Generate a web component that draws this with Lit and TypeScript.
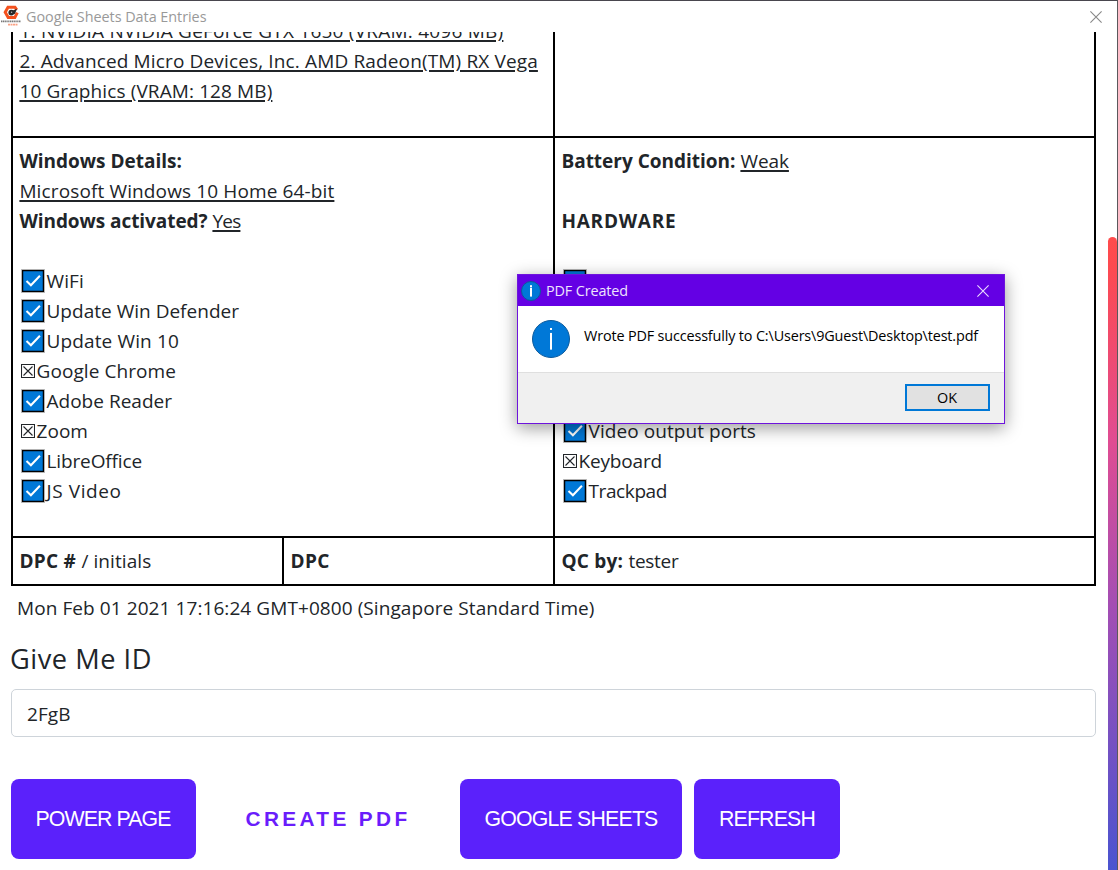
import { LitElement, html, css, svg, nothing } from "lit";
import { customElement, property } from "lit/decorators.js";

/** A run of text whose tracking is adjusted so that it fills a given measure. */
@customElement("fit-text")
class FitText extends LitElement {
  @property({ type: Number }) w = 0;
  static styles = css`
    :host { display: inline-block; white-space: pre; text-decoration: inherit; }
  `;
  render() {
    return html`<slot></slot>`;
  }
  firstUpdated() {
    const n = (this.textContent || "").length;
    const natural = this.getBoundingClientRect().width;
    if (this.w && n) this.style.letterSpacing = `${(this.w - natural) / n}px`;
  }
}

type Item = [boolean, string, number];

const software: Item[] = [
  [true, "WiFi", 37.5],
  [true, "Update Win Defender", 192.5],
  [true, "Update Win 10", 132.5],
  [false, "Google Chrome", 139.5],
  [true, "Adobe Reader", 125.5],
  [false, "Zoom", 51.5],
  [true, "LibreOffice", 95.5],
  [true, "JS Video", 75],
];

const hardware: Item[] = [
  [true, "", 0],
  [true, "", 0],
  [true, "", 0],
  [true, "", 0],
  [true, "", 0],
  [true, "Video output ports", 167.5],
  [false, "Keyboard", 83.5],
  [true, "Trackpad", 78.5],
];

const tick = html`<svg class="tick" width="24" height="24" viewBox="0 0 24 24">
  <rect x="0.5" y="0.5" width="23" height="23" fill="none" stroke="#bdbdbd" />
  <rect x="1.6" y="1.6" width="20.8" height="20.8" fill="#0078d7" stroke="#000" stroke-width="1.3" />
  <path d="M5.5 12l4.4 4.3 9-9.6" fill="none" stroke="#fff" stroke-width="2" />
</svg>`;

const cross = html`<svg class="cross" width="14" height="14" viewBox="0 0 14 14">
  <path d="M.5.5h13v13H.5zM2.5 2.5l9 9M11.5 2.5l-9 9" fill="none" stroke="#212529" stroke-width="1.1" />
</svg>`;

const closeIcon = (color: string) => html`<svg class="x" width="12" height="12" viewBox="0 0 12 12">
  <path d="M.4.4l11.2 11.2M11.6.4L.4 11.6" stroke=${color} stroke-width="1.1" />
</svg>`;

@customElement("app-root")
class AppRoot extends LitElement {
  static styles = css`
    * { box-sizing: border-box; }
    :host {
      display: flex; flex-direction: column; position: relative; box-sizing: border-box;
      width: 1118px; height: 870px; overflow: hidden;
      background: #fff; color: #212529;
      border-top: 1px solid #49464e; border-right: 1px solid #5a585c;
      font: 19px/30px "Open Sans", "Noto Sans", sans-serif;
    }
    .titlebar {
      flex: none; height: 31px; display: flex; align-items: center;
      padding: 0 15px 0 1px; font-size: 14.4px; line-height: 30px; color: #999;
    }
    .logo { margin: -2px 4px 0 0; flex: none; }
    .titlebar .x { margin-left: auto; }
    .x { display: block; flex: none; }
    .main { flex: 1; min-height: 0; display: flex; }
    .page { flex: 1; overflow: hidden; padding-left: 11px; }
    .sheet {
      width: 1085px; margin-top: -16px; display: grid;
      grid-template-columns: 269px 271px 1fr;
      border: 2px solid #000; border-top: 0;
    }
    .cell { padding: 8px 0 0 7px; border-bottom: 2px solid #000; border-left: 2px solid #000; }
    .cell.first { border-left: 0; }
    .wide { grid-column: span 2; }
    .top { height: 122px; padding-top: 0; }
    .mid { height: 400px; }
    .last { height: 46px; border-bottom: 0; }
    .line { height: 30px; display: flex; white-space: pre; }
    .line > u:first-child, .line > b:first-child { margin-left: -0.6px; }
    .line .tick { margin: 3px 2px 0 1px; }
    .line .tick + fit-text, .line .cross + fit-text { margin-left: -0.5px; }
    .line .cross { margin: 8px 2px 0 1px; }
    svg { flex: none; }
    u { text-decoration: underline; text-decoration-thickness: 2px; text-underline-offset: 2px; }
    .stamp { margin: 7px 0 0 6px; height: 30px; }
    h3 { margin: 19px 0 0 -1px; font-size: 27.2px; line-height: 34px; font-weight: 400; height: 34px; }
    .input {
      margin-top: 13px; width: 1085px; height: 48px; padding: 9px 15px;
      border: 1px solid #ced4da; border-radius: 5px; line-height: 30px;
    }
    .buttons { display: flex; margin-top: 42px; }
    .btn {
      height: 80px; border-radius: 8px; background: #5b21fb; color: #fff;
      display: flex; align-items: center; justify-content: center;
      font: 21.3px "Liberation Sans", Arial, sans-serif;
    }
    .power { width: 185px; padding-right: 1px; }
    .create { width: 264px; background: none; color: #6a1dfb; font-weight: 700; font-size: 20.8px; }
    .google { width: 222px; }
    .refresh { width: 146px; margin-left: 12px; }
    .track { flex: none; width: 9px; padding-top: 205px; }
    .thumb {
      height: 700px; border-radius: 5px;
      background: linear-gradient(#ff4b4b 0, #fd4a50 30px, #e04c92 203px, #a34eb4 370px, #4a54d0 633px);
    }
    .dialog {
      position: absolute; left: 517px; top: 273px; width: 488px; height: 150px;
      border: 1px solid #6e14dc; background: #fff; color: #000;
      display: flex; flex-direction: column; font-size: 14.4px; line-height: 20px;
      box-shadow: 0 4px 16px rgba(0, 0, 0, 0.4);
    }
    .dhead {
      height: 31px; flex: none; background: #6400e4; color: #eee4fd;
      display: flex; align-items: center; padding: 0 15px 0 3px;
    }
    .dhead fit-text { margin-left: 5px; }
    .dhead .x { margin-left: auto; }
    .dbody { height: 66px; flex: none; display: flex; padding: 14px 0 0 14px; }
    .dbody fit-text { margin: 6px 0 0 14px; height: 20px; }
    .dfoot {
      flex: 1; background: #f0f0f0; border-top: 1px solid #dfdfdf;
      display: flex; justify-content: flex-end; padding: 11px 14px 0 0;
    }
    .ok {
      width: 85px; height: 27px; border: 2px solid #0078d7; background: #e1e1e1;
      display: flex; align-items: center; justify-content: center; padding-right: 1px;
    }
  `;

  private items(list: Item[]) {
    return list.map(
      ([on, label, w]) => html`<div class="line">${on ? tick : cross}${label
        ? html`<fit-text w=${w}>${label}</fit-text>`
        : nothing}</div>`
    );
  }

  private info(size: number, thick: number) {
    const r = size / 2;
    return html`<svg width=${size} height=${size} viewBox="0 0 ${size} ${size}">
      ${svg`<circle cx=${r} cy=${r} r=${r - 0.5} fill="#0078d7" stroke="#0b5a9c"/>
      <rect x=${r - thick / 2} y=${size * 0.21} width=${thick} height=${thick} fill="#fff"/>
      <rect x=${r - thick / 2} y=${size * 0.34} width=${thick} height=${size * 0.44} fill="#fff"/>`}
    </svg>`;
  }

  render() {
    return html`
      <div class="titlebar">
        <svg class="logo" width="21" height="22" viewBox="0 0 21 22">
          <path d="M16.3 7.6L13.8 12.6H7.2L4.2 7.2 7 2.2h7l1.8 2.6" fill="none" stroke="#f4511e" stroke-width="3" />
          <circle cx="10.3" cy="7.6" r="2.9" fill="#292929" />
          <path d="M9.6 6.4l6.4-2.6-2.2 5.4z" fill="#292929" />
          <circle cx="10.6" cy="7.2" r=".7" fill="#bbb" />
          <path d="M0 16.4h20" stroke="#777" stroke-width="1.6" stroke-dasharray="1.3 .5" />
          <path d="M7 19.6h10" stroke="#f9a184" stroke-width="1.8" stroke-dasharray="2 .5" />
        </svg>
        <fit-text w="180.5">Google Sheets Data Entries</fit-text>
        ${closeIcon("#888")}
      </div>
      <div class="main">
        <div class="page">
          <div class="sheet">
            <div class="cell first wide top">
              <div class="line"><u><fit-text w="484">1. NVIDIA NVIDIA GeForce GTX 1650 (VRAM: 4096 MB)</fit-text></u></div>
              <div class="line"><u><fit-text w="518.5">2. Advanced Micro Devices, Inc. AMD Radeon(TM) RX Vega</fit-text></u></div>
              <div class="line"><u><fit-text w="253">10 Graphics (VRAM: 128 MB)</fit-text></u></div>
            </div>
            <div class="cell top"></div>
            <div class="cell first wide mid">
              <div class="line"><b><fit-text w="162.5">Windows Details:</fit-text></b></div>
              <div class="line"><u><fit-text w="315">Microsoft Windows 10 Home 64-bit</fit-text></u></div>
              <div class="line"><b><fit-text w="193">Windows activated? </fit-text></b><u><fit-text w="28">Yes</fit-text></u></div>
              <div class="line"></div>
              ${this.items(software)}
            </div>
            <div class="cell mid">
              <div class="line"><b><fit-text w="179">Battery Condition: </fit-text></b><u><fit-text w="48.5">Weak</fit-text></u></div>
              <div class="line"></div>
              <div class="line"><b><fit-text w="115">HARDWARE</fit-text></b></div>
              <div class="line"></div>
              ${this.items(hardware)}
            </div>
            <div class="cell first last">
              <div class="line"><b><fit-text w="62">DPC # </fit-text></b><fit-text w="70">/ initials</fit-text></div>
            </div>
            <div class="cell last">
              <div class="line"><b><fit-text w="39.5">DPC</fit-text></b></div>
            </div>
            <div class="cell last">
              <div class="line"><b><fit-text w="67">QC by: </fit-text></b><fit-text w="50">tester</fit-text></div>
            </div>
          </div>
          <div class="stamp"><fit-text w="577.5">Mon Feb 01 2021 17:16:24 GMT+0800 (Singapore Standard Time)</fit-text></div>
          <h3><fit-text w="142">Give Me ID</fit-text></h3>
          <div class="input"><fit-text w="43.5">2FgB</fit-text></div>
          <div class="buttons">
            <div class="btn power"><fit-text w="135">POWER PAGE</fit-text></div>
            <div class="btn create"><fit-text w="165">CREATE PDF</fit-text></div>
            <div class="btn google"><fit-text w="173">GOOGLE SHEETS</fit-text></div>
            <div class="btn refresh"><fit-text w="96">REFRESH</fit-text></div>
          </div>
        </div>
        <div class="track"><div class="thumb"></div></div>
      </div>
      <div class="dialog">
        <div class="dhead">${this.info(20, 2)}<fit-text w="82">PDF Created</fit-text>${closeIcon("#eadcff")}</div>
        <div class="dbody">${this.info(38, 2)}<fit-text w="394">Wrote PDF successfully to C:\\Users\\9Guest\\Desktop\\test.pdf</fit-text></div>
        <div class="dfoot"><div class="ok"><fit-text w="20">OK</fit-text></div></div>
      </div>
    `;
  }
}
